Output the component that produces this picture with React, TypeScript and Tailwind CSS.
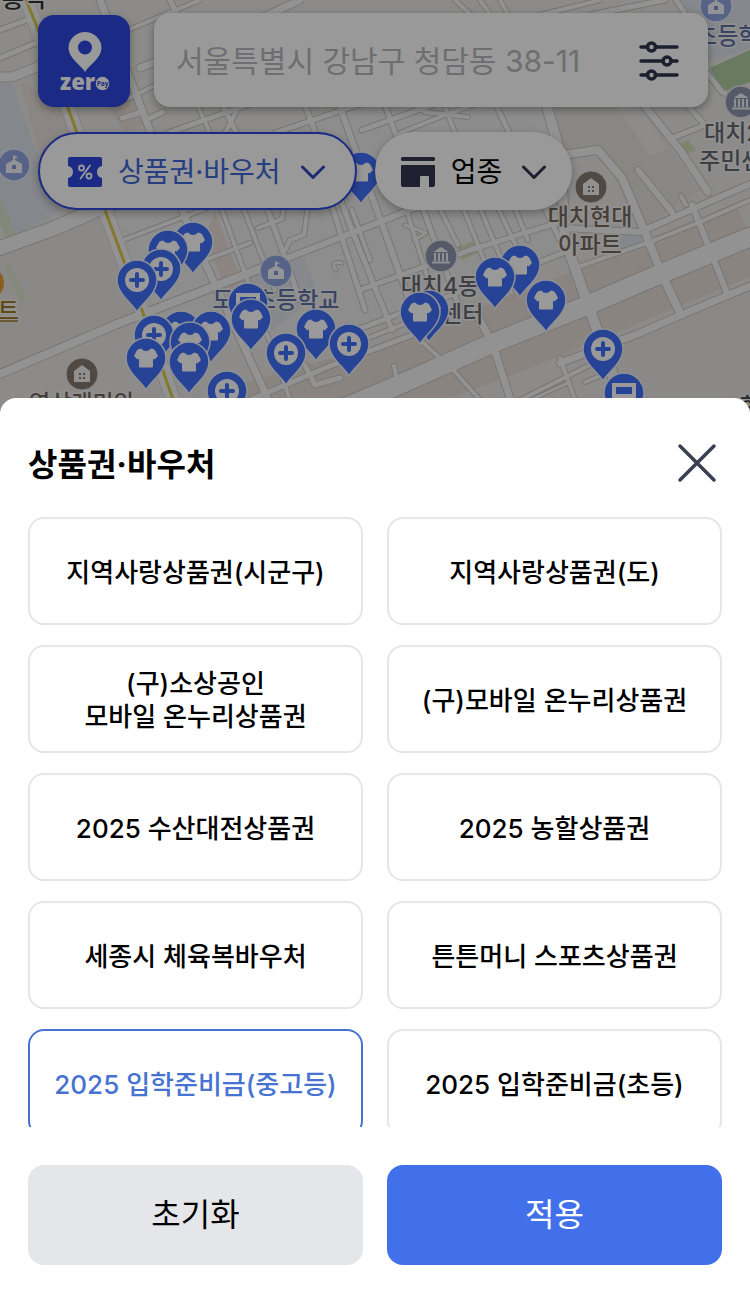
import { useState } from "react";

const FONT = "font-[Inter,'Noto_Sans_CJK_KR',sans-serif]";

type PinKind = "shirt" | "plus" | "store";

const PINS: [number, number, PinKind][] = [
  [361, 172, "shirt"],
  [193, 242, "shirt"],
  [168, 250, "shirt"],
  [161, 269, "plus"],
  [137, 280, "plus"],
  [181, 331, "shirt"],
  [154, 335, "plus"],
  [211, 331, "shirt"],
  [190, 342, "shirt"],
  [146, 358, "shirt"],
  [189, 362, "shirt"],
  [227, 391, "plus"],
  [248, 303, "store"],
  [251, 319, "shirt"],
  [316, 329, "shirt"],
  [286, 353, "plus"],
  [349, 344, "plus"],
  [429, 310, "shirt"],
  [420, 312, "shirt"],
  [520, 265, "shirt"],
  [495, 277, "shirt"],
  [546, 300, "shirt"],
  [603, 349, "plus"],
  [624, 393, "store"],
];

const ROADS: [string, number][] = [
  ["M0 30 L32 18 L28 0", 6],
  ["M0 58 L38 42", 6],
  ["M0 77 L12 77 L60 58", 10],
  ["M0 248 L55 228 L105 206 L180 178", 15],
  ["M0 374 L117 324 L200 292 L262 268", 9],
  ["M100 0 L165 170 L200 252 L275 414", 8],
  ["M128 30 L200 0", 5],
  ["M125 100 L158 84", 5],
  ["M140 68 L240 28 L300 0", 8],
  ["M170 0 L250 160 L300 300", 6],
  ["M122 118 L139 113", 6],
  ["M150 118 L163 112", 6],
  ["M168 133 L250 104", 6],
  ["M195 100 L210 133", 5],
  ["M240 104 L225 133", 5],
  ["M118 242 L215 205", 5],
  ["M176 248 L208 234", 5],
  ["M200 262 L250 243", 5],
  ["M222 210 L262 320 L295 414", 5],
  ["M244 210 L275 290", 5],
  ["M258 228 L282 219 L285 200", 5],
  ["M262 268 L380 222 L470 185", 7],
  ["M284 253 L290 240 L304 235 L308 205", 5],
  ["M305 105 L350 225 L392 330", 6],
  ["M336 270 C330 262 338 262 342 263", 4],
  ["M330 200 L365 310", 6],
  ["M352 210 L370 260", 5],
  ["M275 133 L360 104 L380 92", 6],
  ["M340 107 L420 330", 7],
  ["M362 130 L480 88 L560 58", 6],
  ["M385 105 L460 310", 6],
  ["M400 133 L445 115 L570 70", 5],
  ["M415 105 L425 112 L468 117", 5],
  ["M405 205 L432 292", 5],
  ["M414 240 L426 233 L405 225", 4],
  ["M445 107 L455 133", 5],
  ["M438 205 L458 245", 5],
  ["M462 205 L488 270", 5],
  ["M480 208 L505 268", 5],
  ["M496 105 L560 240", 6],
  ["M498 208 L518 250", 5],
  ["M515 208 L528 240", 5],
  ["M455 0 L470 14", 5],
  ["M480 0 L490 14", 5],
  ["M500 0 L508 14", 5],
  ["M520 20 L600 0", 5],
  ["M590 15 L665 0", 6],
  ["M676 0 L692 24", 6],
  ["M708 74 L722 92 L735 97 L750 92", 6],
  ["M360 290 L470 250 L560 222", 6],
  ["M330 340 L420 306 L500 278 L570 250", 6],
  ["M340 349 L440 310", 5],
  ["M250 400 L330 366 L420 332", 6],
  ["M305 365 L315 385 L340 378", 6],
  ["M397 380 L394 366", 5],
  ["M420 340 L455 372 L480 400", 5],
  ["M475 310 L493 345 L515 414", 8],
  ["M504 298 L501 288 M512 294 L510 288", 4],
  ["M520 400 L600 360", 5],
  ["M560 358 L580 414", 5],
  ["M500 414 L570 382", 4],
  ["M585 382 L615 370", 5],
  ["M545 100 L560 152 L565 240 L590 310 L606 355 L625 414", 11],
  ["M562 155 L598 150 L622 178 L645 232 L663 277 L681 315", 9],
  ["M563 228 L640 232 L750 184", 7],
  ["M575 268 L655 240 L700 222 L750 200", 5],
  ["M638 170 L672 212", 7],
  ["M640 100 L680 150 L708 192", 8],
  ["M672 138 L705 125 L660 75", 6],
  ["M686 205 L681 196", 5],
  ["M692 205 L714 260 L728 296", 7],
  ["M560 363 L640 333 L681 315 L750 286", 8],
  ["M330 414 L403 383 L493 343 L583 307 L653 277 L750 237", 20],
];

const LABELS: { x: number; y: number; text: string; color: string; size: number; anchor: "start" | "middle" | "end" }[] = [
  { x: 46, y: 7, text: "선릉역", color: "#333333", size: 24, anchor: "end" },
  { x: 590, y: 225, text: "대치현대", color: "#75695f", size: 23, anchor: "middle" },
  { x: 590, y: 253, text: "아파트", color: "#75695f", size: 23, anchor: "middle" },
  { x: 276, y: 308, text: "도곡초등학교", color: "#5f72a8", size: 23, anchor: "middle" },
  { x: 440, y: 294, text: "대치4동", color: "#666a74", size: 23, anchor: "middle" },
  { x: 441, y: 322, text: "주민센터", color: "#666a74", size: 23, anchor: "middle" },
  { x: 704, y: 141, text: "대치2동", color: "#666a74", size: 23, anchor: "start" },
  { x: 699, y: 169, text: "주민센터", color: "#666a74", size: 23, anchor: "start" },
  { x: 696, y: 44, text: "초등학교", color: "#5f72a8", size: 23, anchor: "start" },
  { x: 82, y: 411, text: "역삼래미안", color: "#75695f", size: 23, anchor: "middle" },
  { x: 19, y: 319, text: "이마트", color: "#a07828", size: 23, anchor: "end" },
  { x: 740, y: 414, text: "한티역", color: "#4c4c4c", size: 23, anchor: "start" },
];

const SUBWAY_ROAD = "M26 0 L37 27 L68 108 L105 210 L143 313 L178 414";

function PinGlyph({ kind }: { kind: PinKind }) {
  if (kind === "plus") {
    return (
      <>
        <circle r="12" fill="#fff" />
        <path d="M-6 0H6M0 -6V6" stroke="#4070fa" strokeWidth="4" strokeLinecap="round" />
      </>
    );
  }
  if (kind === "store") {
    return (
      <>
        <path d="M-12 -10H12V9H-12Z" fill="#fff" />
        <path d="M-8 -6H8V1H-8Z" fill="#4070fa" />
      </>
    );
  }
  return (
    <path
      d="M-5 -9.5 Q0 -4.5 5 -9.5 Q8.5 -9.3 9.5 -7 L12 -2 L8.5 1.5 L7 .8 V8.5 Q7 9.5 6 9.5 H-6 Q-7 9.5 -7 8.5 V.8 L-8.5 1.5 L-12 -2 L-9.5 -7 Q-8.5 -9.3 -5 -9.5Z"
      fill="#fff"
    />
  );
}

function School({ x, y }: { x: number; y: number }) {
  return (
    <g transform={`translate(${x} ${y})`}>
      <circle r="16" fill="#8fa5e0" stroke="#e4e9f6" strokeWidth="1.5" />
      <path d="M-8 -1 L-1 -5 V-10 L4 -8 L1 -6.5 V-5 L8 -1 V8 H-8Z" fill="#f4f5fa" />
      <rect x="-2" y="0" width="4" height="4" fill="#8095d4" />
    </g>
  );
}

function Civic({ x, y }: { x: number; y: number }) {
  return (
    <g transform={`translate(${x} ${y})`}>
      <circle r="16" fill="#8e96b0" stroke="#e4e6ec" strokeWidth="1.5" />
      <path d="M-7 -4 Q-6 -6 -3.5 -6.5 Q0 -11 3.5 -6.5 Q6 -6 7 -4Z" fill="#f0f1f5" />
      <path d="M-6 -3V5M-2 -3V5M2 -3V5M6 -3V5M-9 6.5H9" stroke="#f0f1f5" strokeWidth="2" />
    </g>
  );
}

function Apartment({ x, y }: { x: number; y: number }) {
  return (
    <g transform={`translate(${x} ${y})`}>
      <circle r="16" fill="#857b70" stroke="#e4e2de" strokeWidth="1" />
      <path d="M-8 -3 L0 -9 L8 -3 V8 H-8Z" fill="#f2f0ee" />
      <path d="M-3 -1h2v2h-2zM1 -1h2v2h-2zM-3 3h2v2h-2zM1 3h2v2h-2z" fill="#857b70" />
    </g>
  );
}

function MapCanvas() {
  return (
    <svg
      className="absolute inset-0 h-full w-full"
      viewBox="0 0 750 414"
      preserveAspectRatio="xMidYMin slice"
      aria-label="지도"
    >
      <rect width="750" height="414" fill="#e9e8e6" />
      <path d="M110 210 L240 133 L380 100 L560 100 L570 250 L440 310 L270 350 L140 330Z" fill="#ebebeb" />
      <path d="M0 374 L117 324 L140 318 L100 208 L0 250Z" fill="#e6e4e1" />
      <path d="M545 105 L640 105 L700 190 L640 230 L600 148 L562 152Z" fill="#e5e2dd" />
      <path d="M617 107 L637 105 L668 148 L650 156Z" fill="#ebe9e6" />
      <path
        d="M250 420 L403 376 L493 343 L583 307 L653 277 L750 237"
        fill="none"
        stroke="#e6dcd5"
        strokeWidth="74"
      />
      <path d="M682 318 L610 345 L632 414 L750 414 V290Z" fill="#e6e4e1" />
      <path d="M105 0 L150 120 L125 133 L90 80Z" fill="#e8ddd6" />
      <path d="M20 83 L70 105 L75 170 L45 170Z" fill="#e8e0da" />
      <path d="M215 212 L245 290 L228 298 L205 235Z" fill="#e8ddd6" />
      <path d="M0 83 L12 84 L32 140 L62 210 L15 236 L0 200Z" fill="#dde1e8" />
      <path d="M0 196 L16 234 L6 238 L0 225Z" fill="#dbe3cd" />
      <path d="M10 263 L27 298 L20 302 L4 266Z" fill="#dbe3cd" />
      <path d="M240 278 L304 256 L318 295 L272 330 L250 320Z" fill="#dfe3e9" />
      <path d="M682 0 H750 V48 L708 62 L690 40Z" fill="#dde1e8" />
      <path d="M619 238 L645 230 L648 240 L620 252Z" fill="#dde2e9" />
      <path d="M710 68 L750 50 V82 L722 92Z" fill="#adcb9f" />
      <path d="M679 144 L688 140 L696 150 L686 155Z" fill="#d3deb8" />
      <path d="M457 248 L475 240 L480 252 L462 260Z" fill="#d1dfb9" />
      <g fill="none" strokeLinejoin="round" strokeLinecap="round">
        <path d={SUBWAY_ROAD} stroke="#c6c4c1" strokeWidth="15" />
        {ROADS.map(([d, w]) => (
          <path key={d} d={d} stroke="#c6c4c1" strokeWidth={w + 1} />
        ))}
        <path d={SUBWAY_ROAD} stroke="#f4f4f4" strokeWidth="14" />
        {ROADS.map(([d, w]) => (
          <path key={d} d={d} stroke="#f4f4f4" strokeWidth={w - 1} />
        ))}
        <path d={SUBWAY_ROAD} stroke="#dcc94a" strokeWidth="3" />
      </g>
      <School x={14} y={165} />
      <School x={276} y={271} />
      <School x={716} y={6} />
      <Civic x={441} y={256} />
      <Civic x={741} y={102} />
      <Apartment x={82} y={374} />
      <Apartment x={591} y={187} />
      <circle cx="-12" cy="283" r="16" fill="#e0a030" />
      {LABELS.map((l) => (
        <text
          key={`${l.text}${l.x}`}
          x={l.x}
          y={l.y}
          textAnchor={l.anchor}
          fontSize={l.size}
          fontWeight="500"
          fill={l.color}
          stroke="#f2f2f0"
          strokeWidth="3"
          strokeLinejoin="round"
          style={{ paintOrder: "stroke" }}
        >
          {l.text}
        </text>
      ))}
      <path d="M0 321 H18" stroke="#a07828" strokeWidth="1.5" />
      {PINS.map(([x, y, kind]) => (
        <g key={`${x}-${y}`} transform={`translate(${x} ${y})`}>
          <path
            d="M0 32 C-4 24 -20 14 -20 0 A20 20 0 0 1 20 0 C20 14 4 24 0 32Z"
            fill="#4070fa"
            stroke="#eef1fa"
            strokeWidth="1.5"
          />
          <PinGlyph kind={kind} />
        </g>
      ))}
    </svg>
  );
}

function Logo() {
  return (
    <svg className="h-full w-full" viewBox="0 0 92 92" aria-hidden="true">
      <path
        fillRule="evenodd"
        d="M47 57 C43 50 30.5 43 30.5 33 A16.5 16 0 0 1 63.5 33 C63.5 43 51 50 47 57Z M47 25.5 A7 7 0 1 0 47 39.5 A7 7 0 1 0 47 25.5Z"
        fill="#fff"
      />
      <text x="22" y="75" fontSize="22" fontWeight="800" fill="#fff" className="font-['Open_Sans',sans-serif]">
        zer
      </text>
      <circle cx="64.5" cy="68.5" r="6.8" fill="#fff" />
      <text x="64.5" y="71" fontSize="6.5" fontWeight="700" textAnchor="middle" fill="#2c47de" className="font-['Open_Sans',sans-serif]">
        Pay
      </text>
    </svg>
  );
}

function Chevron({ className }: { className: string }) {
  return (
    <svg className={`h-4 w-6 ${className}`} viewBox="0 0 24 16" fill="none" aria-hidden="true">
      <path d="M1.5 3 L12 13.5 L22.5 3" stroke="currentColor" strokeWidth="3" strokeLinecap="round" strokeLinejoin="round" />
    </svg>
  );
}

const OPTIONS = [
  "지역사랑상품권(시군구)",
  "지역사랑상품권(도)",
  "(구)소상공인\n모바일 온누리상품권",
  "(구)모바일 온누리상품권",
  "2025 수산대전상품권",
  "2025 농할상품권",
  "세종시 체육복바우처",
  "튼튼머니 스포츠상품권",
  "2025 입학준비금(중고등)",
  "2025 입학준비금(초등)",
];

export default function App() {
  const [selected, setSelected] = useState("2025 입학준비금(중고등)");

  return (
    <div className={`flex h-screen flex-col overflow-hidden bg-white ${FONT}`}>
      <header className="relative h-[414px] shrink-0 overflow-hidden px-[38px] pt-[13px]">
        <MapCanvas />
        <div className="relative flex items-end gap-6 pr-1">
          <a
            href="#home"
            aria-label="zero Pay"
            className="size-[92px] shrink-0 overflow-hidden rounded-2xl bg-[#2c47de] shadow-[0_3px_8px_rgba(0,0,0,0.35)]"
          >
            <Logo />
          </a>
          <div className="flex h-[94px] min-w-0 flex-1 items-center rounded-2xl bg-white pt-0.5 pr-7 pl-[22px] shadow-[0_3px_8px_rgba(0,0,0,0.35)]">
            <input
              aria-label="주소 검색"
              placeholder="서울특별시 강남구 청담동 38-11"
              className="min-w-0 flex-1 bg-transparent text-[30px] outline-none placeholder:text-[#b8b8bc]"
            />
            <button type="button" aria-label="필터" className="shrink-0 text-[#30344e]">
              <svg className="size-[42px]" viewBox="0 0 42 42" fill="none" stroke="currentColor" strokeWidth="3.5" strokeLinecap="round" aria-hidden="true">
                <path d="M3 7H9.5M17.5 7H39M3 21H25M33 21H39M3 35H9.5M17.5 35H39" />
                <circle cx="13.5" cy="7" r="4" />
                <circle cx="29" cy="21" r="4" />
                <circle cx="13.5" cy="35" r="4" />
              </svg>
            </button>
          </div>
        </div>
        <div className="relative mt-[25px] flex gap-[18px]">
          <button
            type="button"
            className="flex h-[78px] items-center rounded-full border-2 border-[#2c47de] bg-white pt-0.5 pr-[30px] pl-7 text-[28px] text-[#4068d8] shadow-[0_3px_8px_rgba(0,0,0,0.3)]"
          >
            <svg className="mr-4 h-[30px] w-[34px]" viewBox="0 0 34 30" aria-hidden="true">
              <path
                d="M2 0H32Q34 0 34 2V9Q29 10 29 15Q29 20 34 21V28Q34 30 32 30H2Q0 30 0 28V21Q5 20 5 15Q5 10 0 9V2Q0 0 2 0Z"
                fill="#2c47de"
              />
              <g fill="none" stroke="#fff" strokeWidth="1.8">
                <circle cx="13.5" cy="11" r="2.5" />
                <circle cx="21" cy="19" r="2.5" />
                <path d="M22 8.5 L12.5 21.5" strokeLinecap="round" />
              </g>
            </svg>
            상품권·바우처
            <Chevron className="ml-5 text-[#3448c0]" />
          </button>
          <button
            type="button"
            className="flex h-[78px] items-center rounded-full bg-white px-[26px] pt-0.5 text-[28px] text-black shadow-[0_3px_8px_rgba(0,0,0,0.3)]"
          >
            <svg className="mr-4 h-[30px] w-[34px]" viewBox="0 0 34 30" fill="#34364f" aria-hidden="true">
              <rect width="34" height="4" rx="1.5" />
              <path d="M0 9Q0 8 1 8H33Q34 8 34 9V28Q34 30 32 30H28V20Q28 19 27 19H20Q19 19 19 20V30H2Q0 30 0 28Z" />
            </svg>
            업종
            <Chevron className="ml-5 text-[#34364f]" />
          </button>
        </div>
        <div className="absolute inset-0 bg-black/40" />
      </header>

      <section
        role="dialog"
        aria-labelledby="sheet-title"
        className="relative -mt-4 flex min-h-0 flex-1 flex-col rounded-t-2xl bg-white px-7 pt-10 pb-[26px]"
      >
        <div className="flex items-center justify-between">
          <h1 id="sheet-title" className="pt-1 text-[32px] leading-[46px] font-bold text-black">
            상품권·바우처
          </h1>
          <button type="button" aria-label="닫기" className="p-1 text-[#3a3f51]">
            <svg className="size-[42px]" viewBox="0 0 42 42" stroke="currentColor" strokeWidth="3.5" strokeLinecap="round" aria-hidden="true">
              <path d="M4 4 L38 38 M38 4 L4 38" />
            </svg>
          </button>
        </div>

        <div className="mt-[29px] grid min-h-0 flex-1 auto-rows-[108px] grid-cols-2 gap-x-6 gap-y-5 overflow-y-auto [scrollbar-width:none]">
          {OPTIONS.map((name) => (
            <button
              key={name}
              type="button"
              aria-pressed={selected === name}
              onClick={() => setSelected(name)}
              className={`rounded-2xl border-2 pt-0.5 text-[26px] leading-[33px] font-medium whitespace-pre-line ${
                selected === name ? "border-[#4673d2] text-[#4673d2]" : "border-[#e6e6e6] text-black"
              }`}
            >
              {name}
            </button>
          ))}
        </div>

        <div className="mt-[38px] grid grid-cols-2 gap-6">
          <button type="button" className="h-[100px] rounded-2xl bg-[#e5e6ea] text-[32px] text-black">
            초기화
          </button>
          <button type="button" className="h-[100px] rounded-2xl bg-[#4270ea] text-[32px] text-white">
            적용
          </button>
        </div>
      </section>
    </div>
  );
}
